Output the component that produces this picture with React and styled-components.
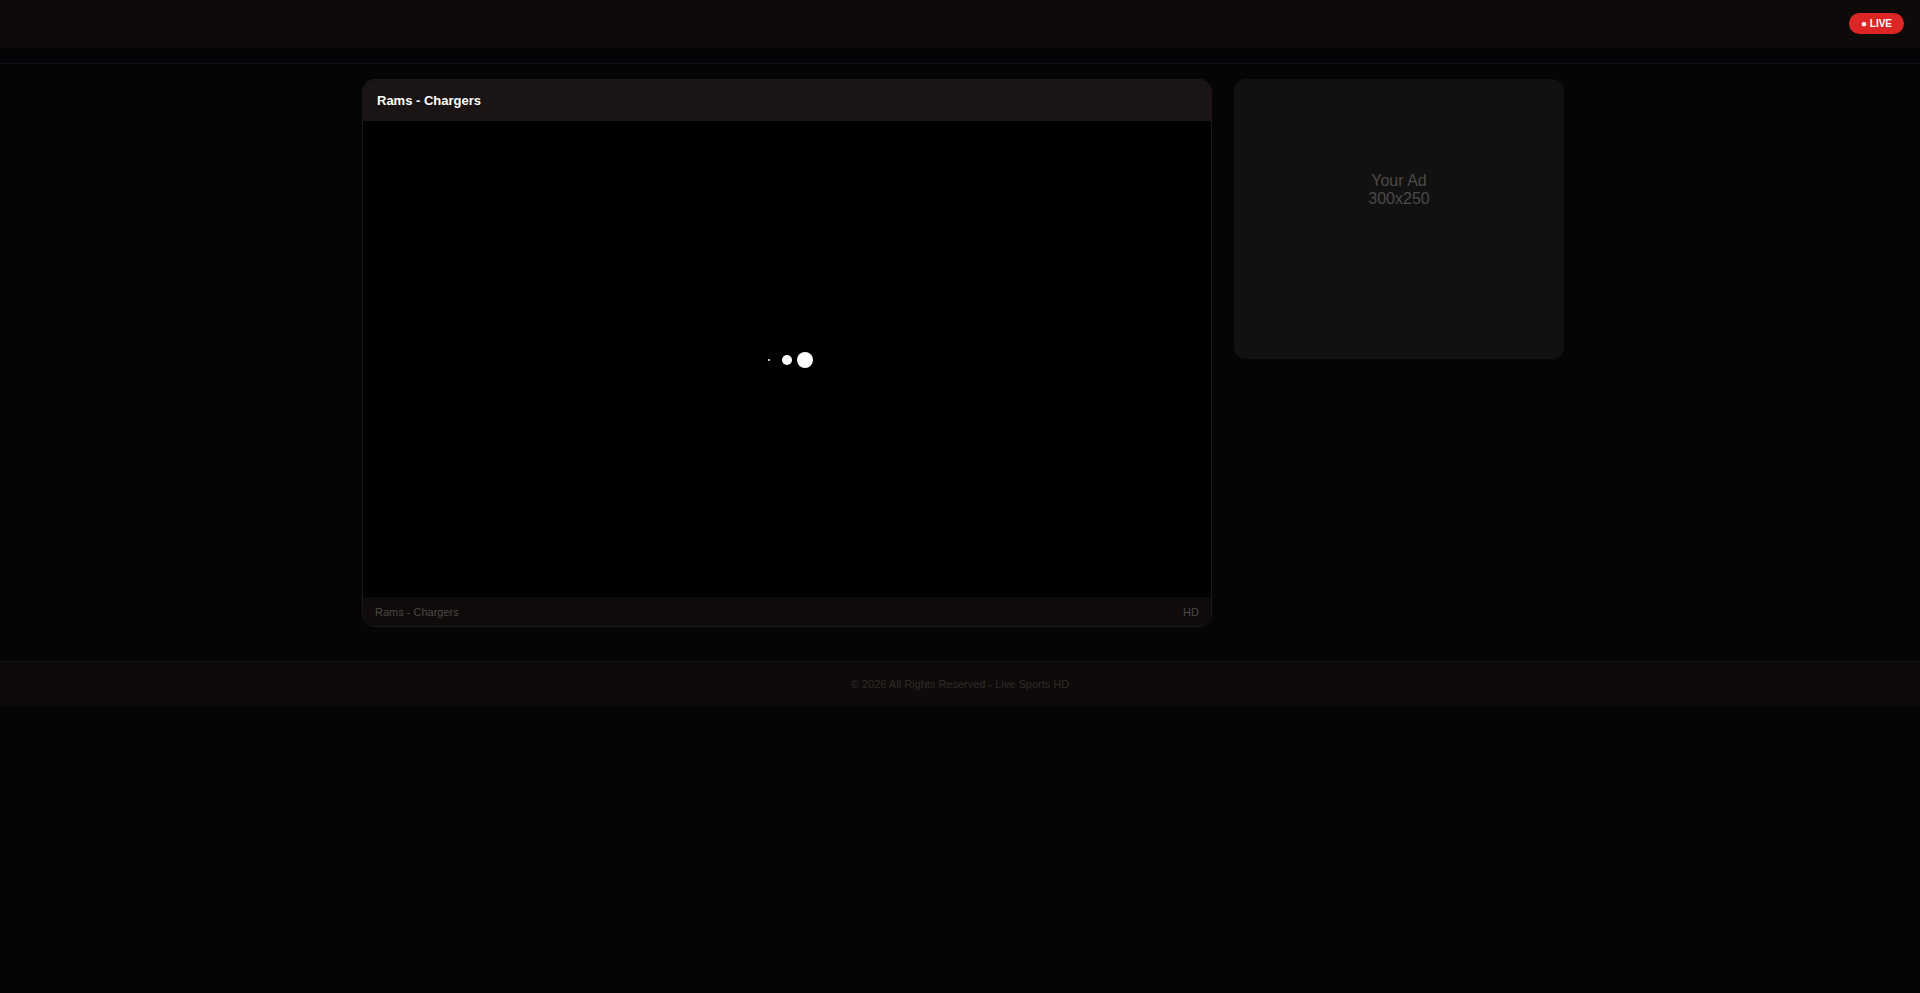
import React from "react";
import styled, { createGlobalStyle } from "styled-components";

const GlobalStyle = createGlobalStyle`
  html, body {
    margin: 0;
    padding: 0;
    background: #050508;
    font-family: "Liberation Sans", Arial, sans-serif;
  }
`;

const TopBar = styled.header`
  height: 48px;
  background: #0d0a09;
  display: flex;
  align-items: center;
  justify-content: flex-end;
  padding: 0 16px;
`;

const LiveBadge = styled.span`
  background: #dc2626;
  color: #fff;
  font-size: 10px;
  font-weight: 700;
  line-height: 13px;
  padding: 4px 12px;
  border-radius: 20px;
  margin-top: -1px;
`;

const NavStrip = styled.div`
  height: 15px;
  border-bottom: 1px solid #121216;
`;

const Main = styled.main`
  margin-left: 362px;
  padding: 15px 0 34px;
  display: flex;
  align-items: flex-start;
  gap: 22px;
`;

const PlayerCard = styled.section`
  width: 850px;
  box-sizing: border-box;
  border: 1px solid #1a1818;
  border-radius: 12px;
  overflow: hidden;
  background: #000;
`;

const CardTitle = styled.div`
  height: 41px;
  padding: 0 14px;
  display: flex;
  align-items: center;
  background: #1a1414;
  color: #fff;
  font-size: 13px;
  font-weight: 700;
`;

const Video = styled.div`
  height: 476px;
  box-sizing: border-box;
  padding-top: 2px;
  background: #000;
  display: grid;
  grid-template-columns: repeat(3, 18px);
  justify-content: center;
  align-content: center;
  place-items: center;
`;

const Dot = styled.span`
  width: ${(p) => p.$size}px;
  height: ${(p) => p.$size}px;
  border-radius: 50%;
  background: #fff;
`;

const CardFooter = styled.div`
  height: 29px;
  padding: 0 12px;
  display: flex;
  align-items: center;
  justify-content: space-between;
  background: #0e0b0a;
  color: #4d4848;
  font-size: 11px;
`;

const AdBox = styled.aside`
  width: 330px;
  height: 280px;
  box-sizing: border-box;
  padding-top: 93px;
  background: #121111;
  border-radius: 12px;
  color: #4d4a4a;
  font-size: 16px;
  line-height: 18px;
  text-align: center;
`;

const SiteFooter = styled.footer`
  height: 44px;
  border-top: 1px solid #1a1614;
  background: #0d0a09;
  display: flex;
  align-items: center;
  justify-content: center;
  color: #302a2a;
  font-size: 11px;
`;

export default function App() {
  return (
    <>
      <GlobalStyle />
      <TopBar>
        <LiveBadge>● LIVE</LiveBadge>
      </TopBar>
      <NavStrip />
      <Main>
        <PlayerCard>
          <CardTitle>Rams - Chargers</CardTitle>
          <Video>
            <Dot $size={2} />
            <Dot $size={10} />
            <Dot $size={16} />
          </Video>
          <CardFooter>
            <span>Rams - Chargers</span>
            <span>HD</span>
          </CardFooter>
        </PlayerCard>
        <AdBox>
          Your Ad
          <br />
          300x250
        </AdBox>
      </Main>
      <SiteFooter>© 2026 All Rights Reserved - Live Sports HD</SiteFooter>
    </>
  );
}
